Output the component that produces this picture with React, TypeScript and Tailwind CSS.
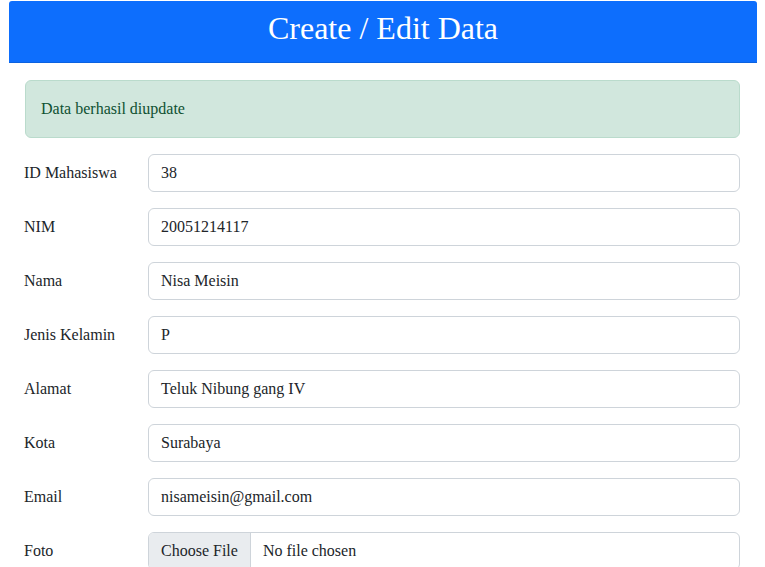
import React from "react";

const fields: { label: string; value: string }[] = [
  { label: "ID Mahasiswa", value: "38" },
  { label: "NIM", value: "20051214117" },
  { label: "Nama", value: "Nisa Meisin" },
  { label: "Jenis Kelamin", value: "P" },
  { label: "Alamat", value: "Teluk Nibung gang IV" },
  { label: "Kota", value: "Surabaya" },
  { label: "Email", value: "nisameisin@gmail.com" },
];

export default function App() {
  return (
    <div
      className="w-[765px] h-[567px] overflow-hidden bg-white text-[#212529] text-[16px]"
      style={{ fontFamily: '"Liberation Serif", "Times New Roman", serif' }}
    >
      <div className="ml-[9px] mt-[1px] w-[748px] h-[62px] bg-[#0d6efd] rounded-t-[3px] border-b border-[#0b62e0] flex items-center justify-center">
        <h1 className="text-white text-[32px] leading-none pb-[7px]">Create / Edit Data</h1>
      </div>
      <div className="pl-[24px] pr-[25px] pt-[17px]">
        <div className="h-[58px] ml-[1px] rounded-[6px] border border-[#badbcc] bg-[#d1e7dd] text-[#0f5132] px-[15px] flex items-center">
          Data berhasil diupdate
        </div>
        <div className="flex flex-col gap-[16px] mt-[16px]">
          {fields.map((f) => (
            <div key={f.label} className="flex items-center">
              <label className="w-[124px] shrink-0">{f.label}</label>
              <div className="flex-1 h-[38px] border border-[#ced4da] rounded-[6px] px-[12px] flex items-center">
                {f.value}
              </div>
            </div>
          ))}
          <div className="flex items-center">
            <label className="w-[124px] shrink-0">Foto</label>
            <div className="flex-1 h-[38px] border border-[#ced4da] rounded-[6px] flex items-center overflow-hidden">
              <div className="h-full bg-[#e9ecef] border-r border-[#ced4da] px-[12px] flex items-center">
                Choose File
              </div>
              <div className="px-[12px]">No file chosen</div>
            </div>
          </div>
        </div>
      </div>
    </div>
  );
}
